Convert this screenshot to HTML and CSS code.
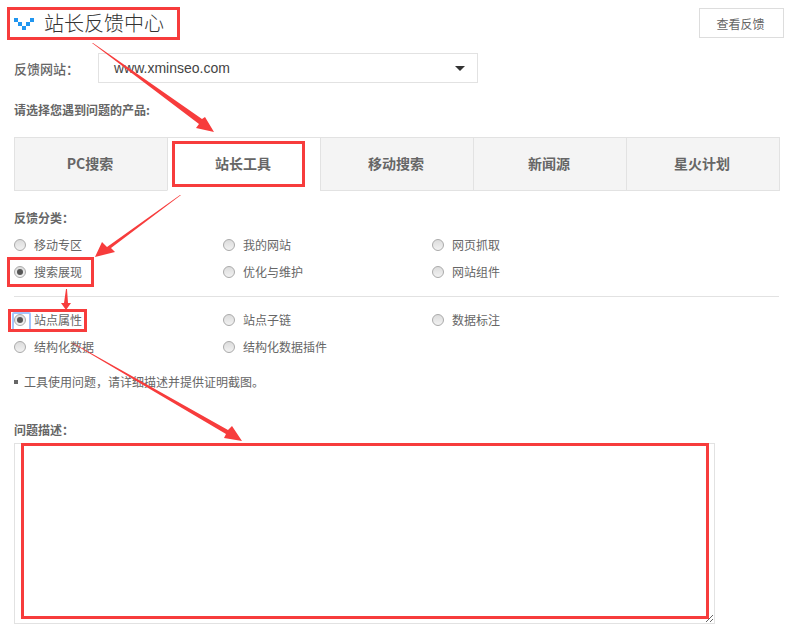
FILE: index.html
```html
<!DOCTYPE html>
<html lang="zh-CN">
<head>
<meta charset="utf-8">
<title>站长反馈中心</title>
<link rel="stylesheet" href="styles.css">
</head>
<body>
<main class="page">
  <header class="head">
    <div class="brand">
      <svg class="logo" width="20" height="12" viewBox="0 0 20 12"><path fill="#2196f0" d="M0 0h4v4H0zM4 4h4v4H4zM8 8h4v4H8zM12 4h4v4h-4zM16 0h4v4h-4z"/></svg>
      <h1 class="title">站长反馈中心</h1>
    </div>
    <button class="view-btn" type="button">查看反馈</button>
  </header>

  <div class="site-row">
    <span class="site-label">反馈网站：</span>
    <div class="site-select"><span>www.xminseo.com</span><i class="caret"></i></div>
  </div>

  <p class="label label-product">请选择您遇到问题的产品:</p>

  <nav class="tabs">
    <a class="tab">PC搜索</a>
    <a class="tab active">站长工具</a>
    <a class="tab">移动搜索</a>
    <a class="tab">新闻源</a>
    <a class="tab">星火计划</a>
  </nav>

  <p class="label label-cat">反馈分类：</p>

  <div class="options">
    <label class="opt"><i class="radio"></i>移动专区</label>
    <label class="opt"><i class="radio"></i>我的网站</label>
    <label class="opt"><i class="radio"></i>网页抓取</label>
    <label class="opt"><i class="radio on"></i>搜索展现</label>
    <label class="opt"><i class="radio"></i>优化与维护</label>
    <label class="opt"><i class="radio"></i>网站组件</label>
  </div>
  <hr class="sep">
  <div class="options">
    <label class="opt"><i class="radio on focus"></i>站点属性</label>
    <label class="opt"><i class="radio"></i>站点子链</label>
    <label class="opt"><i class="radio"></i>数据标注</label>
    <label class="opt"><i class="radio"></i>结构化数据</label>
    <label class="opt"><i class="radio"></i>结构化数据插件</label>
  </div>

  <p class="note"><i class="bullet"></i>工具使用问题，请详细描述并提供证明截图。</p>

  <p class="label label-desc">问题描述：</p>
  <textarea class="desc"></textarea>

  <svg class="marks" width="789" height="639" viewBox="0 0 789 639">
    <g class="boxes">
      <rect x="8.5" y="8.5" width="170" height="30"/>
      <rect x="173.5" y="142.5" width="130" height="43"/>
      <rect x="8.5" y="258.5" width="84" height="27"/>
      <rect x="9.5" y="310.5" width="76" height="20"/>
      <rect x="22.5" y="444.5" width="685" height="173"/>
    </g>
    <g class="arrows">
      <path d="M92 43L93 43L202 119L205 117L214 132L196 128L199 124Z"/>
      <path d="M181 195L180 195L107 247L102 242L95 257L115 252L111 248Z"/>
      <path d="M66 289L67 289L68 303L71 303L66 310L61 303L64 303Z"/>
      <path d="M72 343L73 343L228 430L232 426L242 441L224 438L226 434Z"/>
    </g>
  </svg>
</main>
</body>
</html>
```

FILE: styles.css
```css
* { box-sizing: border-box; }
html, body { margin: 0; padding: 0; background: #fff; }
body {
  font-family: "Noto Sans CJK SC", "Liberation Sans", sans-serif;
  font-size: 12px;
  color: #666;
  overflow: hidden;
}
.page { position: relative; width: 789px; height: 639px; padding: 8px 5px 0 14px; }

.head { display: flex; justify-content: space-between; align-items: flex-start; height: 30px; }
.brand { display: flex; align-items: center; gap: 10px; height: 30px; }
.logo { display: block; margin-top: 1px; }
.title { margin: 0; font-size: 20px; font-weight: 300; line-height: 30px; color: #333; }
.view-btn {
  width: 85px; height: 30px; padding: 0 2px 0 0;
  background: #fff; border: 1px solid #ddd;
  font: inherit; color: #666;
}

.site-row { display: flex; align-items: center; height: 30px; margin-top: 15px; }
.site-label { width: 84px; font-size: 13px; font-weight: 500; color: #666; }
.site-select {
  display: flex; align-items: center; justify-content: space-between;
  width: 380px; height: 30px; padding: 0 12px 0 15px;
  border: 1px solid #e2e2e2;
  font-family: "Liberation Sans", sans-serif; font-size: 14px; color: #444;
}
.caret { width: 0; height: 0; border: 5.5px solid transparent; border-top: 5.5px solid #333; border-bottom: 0; }

.label { margin: 0; font-weight: 700; line-height: 16px; color: #666; }
.label-product { margin-top: 19px; }
.tabs { display: flex; width: 766px; height: 54px; margin-top: 19px; }
.tab {
  flex: 1; display: flex; align-items: center; justify-content: center;
  padding: 0 2px 2px 0;
  background: #f4f4f4; border: 1px solid #e2e2e2; margin-left: -1px;
  font-size: 14px; font-weight: 700; color: #666;
}
.tab:first-child { margin-left: 0; }
.tab.active { background: #fff; border-bottom-color: #fff; }

.label-cat { margin-top: 19px; }
.options { display: grid; grid-template-columns: repeat(3, 209px); grid-auto-rows: 27px; }
.label-cat + .options { margin-top: 5px; }
.opt { display: flex; align-items: center; gap: 8px; color: #666; }
.radio {
  position: relative; width: 12px; height: 12px; border-radius: 50%;
  background: linear-gradient(#dcdcdc, #f2f2f2);
  border: 1px solid #aaa;
}
.radio.on::after {
  content: ""; position: absolute; left: 2px; top: 2px; width: 6px; height: 6px;
  border-radius: 50%; background: #555;
}
.radio.focus::before {
  content: ""; position: absolute; left: -3px; top: -3px; width: 15px; height: 16px;
  border: 2px solid #a4c6fb; border-radius: 2px;
}
.sep { height: 1px; margin: 11px 5px 9px 0; border: 0; background: #e2e2e2; }

.note { display: flex; align-items: center; gap: 6px; margin: 14px 0 0; line-height: 16px; }
.bullet { width: 4px; height: 4px; background: #666; }
.label-desc { margin-top: 32px; }
.desc {
  display: block; width: 701px; height: 181px; margin-top: 5px;
  border: 1px solid #e2e2e2; background: #fff; resize: both; outline: 0;
}

.marks { position: absolute; left: 0; top: 0; pointer-events: none; }
.boxes rect { fill: none; stroke: #f73c3c; stroke-width: 3; }
.arrows path { fill: #f73c3c; }
```
